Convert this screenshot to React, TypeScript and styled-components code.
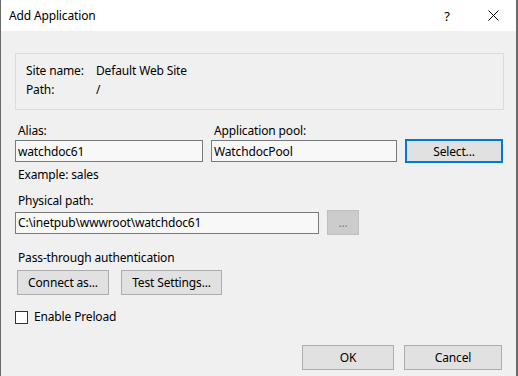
import React from 'react';
import styled, { createGlobalStyle } from 'styled-components';

const GlobalStyle = createGlobalStyle`
  html, body {
    margin: 0;
    padding: 0;
    background: #f0f0f0;
  }
  * {
    box-sizing: border-box;
  }
`;

const Window = styled.div`
  width: 518px;
  height: 376px;
  display: flex;
  flex-direction: column;
  background: #f0f0f0;
  border-left: 1px solid #6a6a6a;
  border-right: 2px solid #6a6a6a;
  font-family: "Noto Sans", "Open Sans", sans-serif;
  font-size: 12px;
  letter-spacing: -0.15px;
  color: #000;
`;

const TitleBar = styled.div`
  height: 31px;
  flex-shrink: 0;
  background: #fff;
  display: flex;
  align-items: center;
  padding-left: 8px;
`;

const Title = styled.span`
  flex: 1;
`;

const TitleButton = styled.span`
  width: 46px;
  height: 31px;
  display: flex;
  align-items: center;
  justify-content: center;
  font-size: 13px;
`;

const Body = styled.div`
  flex: 1;
  display: flex;
  flex-direction: column;
  padding: 22px 12px 6px 14px;
`;

const GroupBox = styled.div`
  height: 57px;
  border: 1px solid #dcdcdc;
  padding: 7px 10px 0;
  display: grid;
  grid-template-columns: 70px 1fr;
  grid-auto-rows: 19px;
  align-items: center;
`;

const Label = styled.div<{ $top?: number }>`
  line-height: 17px;
  margin-top: ${(p) => p.$top ?? 0}px;
  padding-left: 3px;
`;

const PoolGrid = styled.div`
  display: grid;
  grid-template-columns: 188px 186px 98px;
  column-gap: 8px;
  margin-top: 12px;
  margin-right: 3px;
  align-items: center;
`;

const TextBox = styled.div<{ $width?: number }>`
  height: 22px;
  width: ${(p) => (p.$width ? `${p.$width}px` : 'auto')};
  border: 1px solid #7a7a7a;
  background: #f8f8f8;
  padding-left: 2px;
  display: flex;
  align-items: center;
  white-space: nowrap;
`;

const Button = styled.div<{ $width: number; $focused?: boolean; $disabled?: boolean }>`
  width: ${(p) => p.$width}px;
  height: ${(p) => (p.$focused ? 24 : 25)}px;
  display: flex;
  align-items: center;
  justify-content: center;
  background: ${(p) => (p.$disabled ? '#cccccc' : '#e1e1e1')};
  border: ${(p) => (p.$focused ? '2px solid #0078d7' : `1px solid ${p.$disabled ? '#bfbfbf' : '#adadad'}`)};
  color: ${(p) => (p.$disabled ? '#838383' : '#000')};
`;

const Row = styled.div<{ $top: number; $gap: number; $inset?: number }>`
  display: flex;
  align-items: center;
  gap: ${(p) => p.$gap}px;
  margin-top: ${(p) => p.$top}px;
  padding-left: ${(p) => p.$inset ?? 0}px;
`;

const CheckRow = styled.label`
  display: flex;
  align-items: center;
  gap: 6px;
  margin-top: 14px;
  line-height: 16px;
`;

const CheckBox = styled.span`
  width: 13px;
  height: 13px;
  border: 1px solid #333;
  background: #fff;
`;

const Footer = styled.div`
  margin-top: auto;
  display: flex;
  justify-content: flex-end;
  gap: 10px;
  padding-right: 2px;
`;

const CloseIcon = () => (
  <svg width="11" height="11" viewBox="0 0 11 11">
    <path d="M0.5 0.5 L10.5 10.5 M10.5 0.5 L0.5 10.5" stroke="#000" strokeWidth="1" fill="none" />
  </svg>
);

const App: React.FC = () => (
  <>
    <GlobalStyle />
    <Window>
      <TitleBar>
        <Title>Add Application</Title>
        <TitleButton>?</TitleButton>
        <TitleButton>
          <CloseIcon />
        </TitleButton>
      </TitleBar>
      <Body>
        <GroupBox>
          <span>Site name:</span>
          <span>Default Web Site</span>
          <span>Path:</span>
          <span>/</span>
        </GroupBox>

        <PoolGrid>
          <Label>Alias:</Label>
          <Label>Application pool:</Label>
          <span />
          <TextBox>watchdoc61</TextBox>
          <TextBox>WatchdocPool</TextBox>
          <Button $width={98} $focused>Select...</Button>
        </PoolGrid>

        <Label $top={3}>Example: sales</Label>
        <Label $top={9}>Physical path:</Label>
        <Row $top={1} $gap={8}>
          <TextBox $width={304}>C:\inetpub\wwwroot\watchdoc61</TextBox>
          <Button $width={32} $disabled>...</Button>
        </Row>

        <Label $top={14}>Pass-through authentication</Label>
        <Row $top={4} $gap={12} $inset={2}>
          <Button $width={92}>Connect as...</Button>
          <Button $width={101}>Test Settings...</Button>
        </Row>

        <CheckRow>
          <CheckBox />
          Enable Preload
        </CheckRow>

        <Footer>
          <Button $width={92}>OK</Button>
          <Button $width={98}>Cancel</Button>
        </Footer>
      </Body>
    </Window>
  </>
);

export default App;
